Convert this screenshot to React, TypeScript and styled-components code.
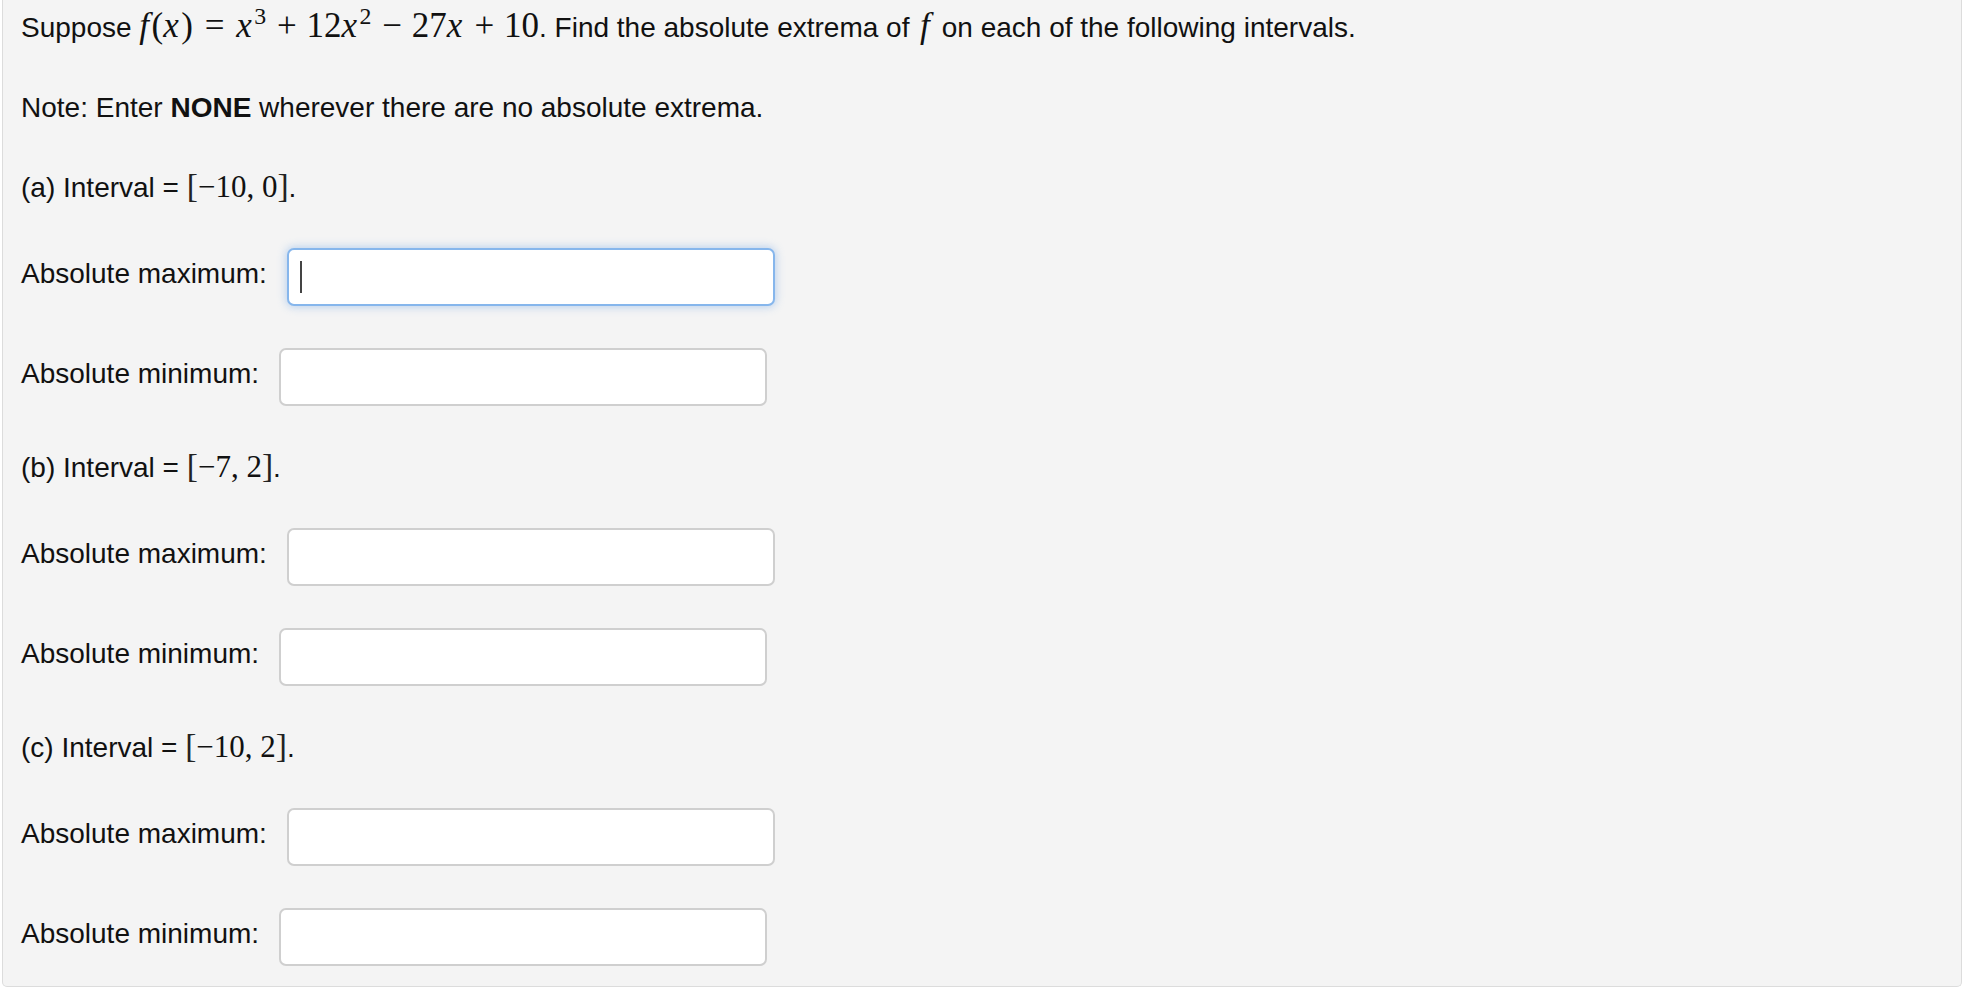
import React from 'react'
import styled, { createGlobalStyle } from 'styled-components'

const GlobalStyle = createGlobalStyle`
  html, body {
    margin: 0;
    padding: 0;
    background: #ffffff;
  }
  body {
    font-family: 'Liberation Sans', Arial, Helvetica, sans-serif;
    color: #111111;
  }
`

const Page = styled.div`
  padding: 0 4px 6px 2px;
`

const Panel = styled.div`
  display: flex;
  flex-direction: column;
  gap: 40px;
  background: #f4f4f4;
  border: 1px solid #dcdcdc;
  border-top: none;
  border-radius: 0 0 5px 5px;
  padding: 8px 18px 18px 18px;
`

const TextLine = styled.div`
  font-size: 28px;
  line-height: 40px;
  height: 40px;
  white-space: nowrap;
`

const Math = styled.span<{ $big?: boolean }>`
  font-family: 'Liberation Serif', 'Times New Roman', serif;
  font-size: ${p => (p.$big ? '35px' : '31px')};
  line-height: 0;
`

const Var = styled.i`
  font-style: italic;
  margin-right: 0.07em;
`

const LoneVar = styled.i`
  font-family: 'Liberation Serif', 'Times New Roman', serif;
  font-size: 35px;
  line-height: 0;
  margin: 0 0.12em 0 0.08em;
`

const Sup = styled.sup`
  font-size: 0.68em;
  vertical-align: 0.55em;
  line-height: 0;
  margin-right: 0.04em;
`

const Op = styled.span<{ $rel?: boolean }>`
  margin: 0 ${p => (p.$rel ? '0.34em' : '0.28em')};
`

const Bracket = styled.span`
  font-weight: 300;
  font-size: 1.08em;
  color: #222;
`

const AnswerRow = styled.div`
  display: flex;
  align-items: flex-start;
  gap: 20px;
  height: 60px;
`

const Label = styled.div`
  font-size: 28px;
  line-height: 40px;
  padding-top: 6px;
  white-space: nowrap;
`

const Field = styled.div<{ $focused?: boolean }>`
  display: flex;
  align-items: center;
  box-sizing: border-box;
  width: 488px;
  height: 58px;
  background: #ffffff;
  border: 2px solid ${p => (p.$focused ? '#86b6ec' : '#cfcfcf')};
  border-radius: 7px;
  box-shadow: ${p => (p.$focused ? '0 0 8px 1px rgba(110, 165, 230, 0.45)' : 'none')};
`

const Caret = styled.span`
  width: 2px;
  height: 32px;
  margin-left: 11px;
  background: #444444;
`

function Interval({ part, lo, hi }: { part: string; lo: string; hi: string }) {
  return (
    <TextLine>
      ({part}) Interval = <Math>
        <Bracket>[</Bracket>−{lo}, {hi}<Bracket>]</Bracket>
      </Math>.
    </TextLine>
  )
}

function Answer({ label, focused }: { label: string; focused?: boolean }) {
  return (
    <AnswerRow>
      <Label>{label}</Label>
      <Field $focused={focused}>{focused && <Caret />}</Field>
    </AnswerRow>
  )
}

const parts = [
  { part: 'a', lo: '10', hi: '0' },
  { part: 'b', lo: '7', hi: '2' },
  { part: 'c', lo: '10', hi: '2' },
]

export default function App() {
  return (
    <Page>
      <GlobalStyle />
      <Panel>
        <TextLine>
          Suppose{' '}
          <Math $big>
            <Var>f</Var>(<Var>x</Var>)<Op $rel>=</Op>
            <Var>x</Var>
            <Sup>3</Sup>
            <Op>+</Op>12<Var>x</Var>
            <Sup>2</Sup>
            <Op>−</Op>27<Var>x</Var>
            <Op>+</Op>10
          </Math>
          . Find the absolute extrema of <LoneVar>f</LoneVar> on each of the following intervals.
        </TextLine>
        <TextLine>
          Note: Enter <b>NONE</b> wherever there are no absolute extrema.
        </TextLine>
        {parts.map((p, i) => (
          <React.Fragment key={p.part}>
            <Interval part={p.part} lo={p.lo} hi={p.hi} />
            <Answer label="Absolute maximum:" focused={i === 0} />
            <Answer label="Absolute minimum:" />
          </React.Fragment>
        ))}
      </Panel>
    </Page>
  )
}
